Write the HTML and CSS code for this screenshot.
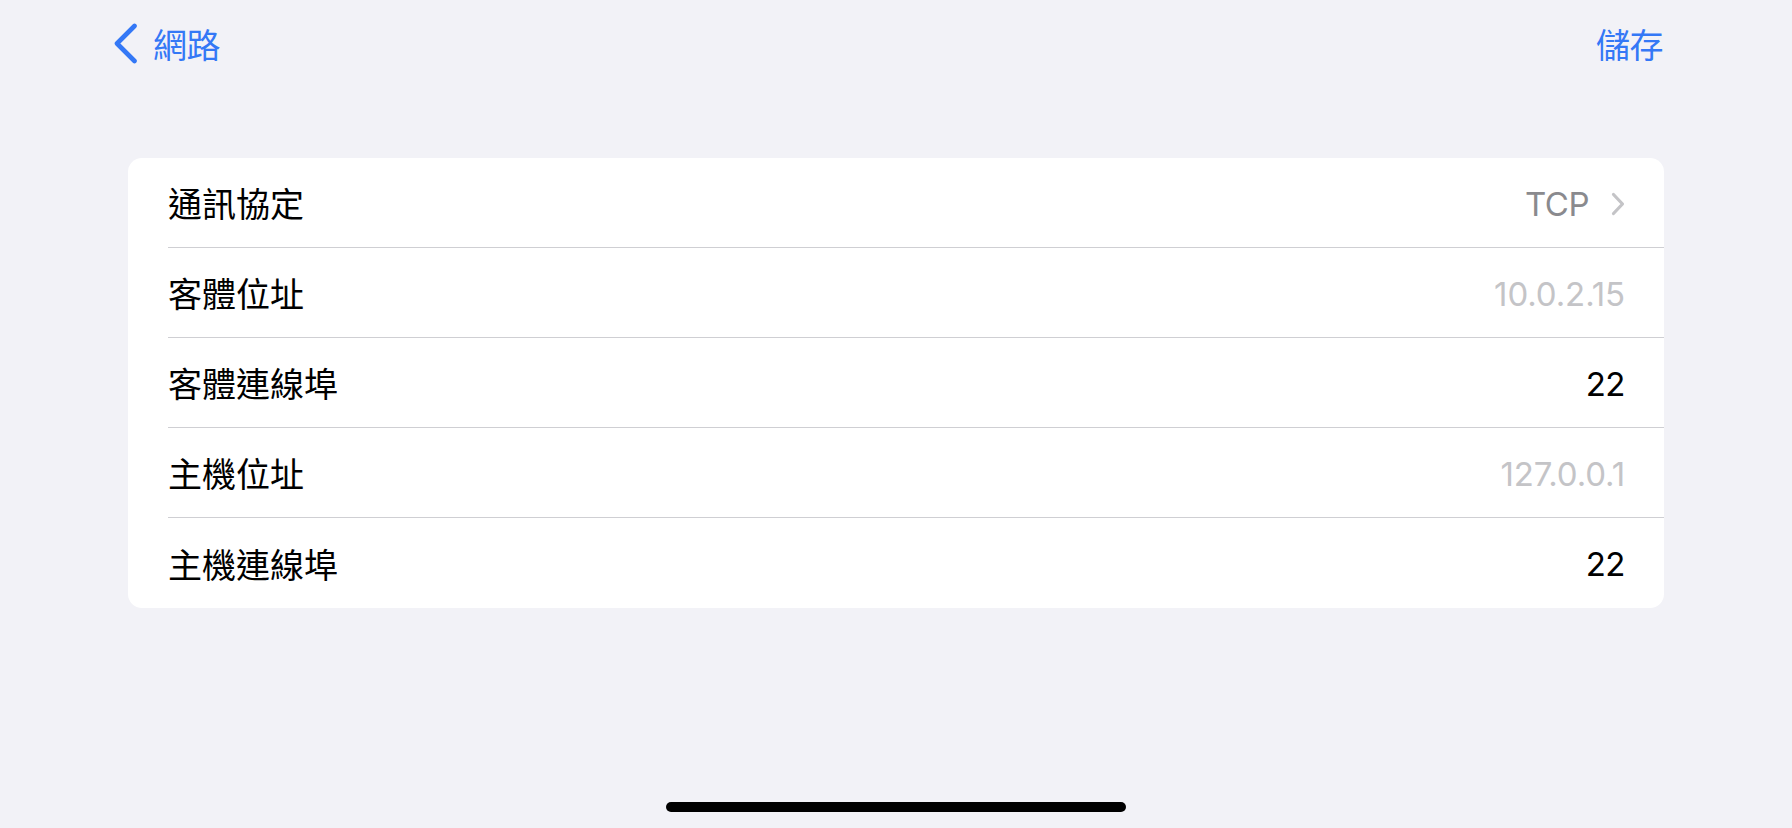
FILE: index.html
```html
<!DOCTYPE html>
<html lang="zh-Hant">
<head>
<meta charset="utf-8">
<title>網路</title>
<link rel="stylesheet" href="styles.css">
</head>
<body>
<div class="screen">
  <header class="nav">
    <a class="back">
      <svg class="back-icon" width="26" height="42" viewBox="0 0 26 42"><path d="M21.5 3 L4 20.5 L21.5 38" fill="none" stroke="#3478F6" stroke-width="4.6" stroke-linecap="round" stroke-linejoin="round"/></svg>
      <span class="nav-text">網路</span>
    </a>
    <a class="nav-text save">儲存</a>
  </header>

  <section class="card">
    <div class="row">
      <div class="row-inner">
        <span class="label">通訊協定</span>
        <span class="value secondary">TCP<svg class="chev" width="14" height="24" viewBox="0 0 14 24"><path d="M2.5 2.5 L11.5 12 L2.5 21.5" fill="none" stroke="#C4C4C7" stroke-width="3.2" stroke-linecap="round" stroke-linejoin="round"/></svg></span>
      </div>
    </div>
    <div class="row">
      <div class="row-inner">
        <span class="label">客體位址</span>
        <span class="value placeholder">10.0.2.15</span>
      </div>
    </div>
    <div class="row">
      <div class="row-inner">
        <span class="label">客體連線埠</span>
        <span class="value">22</span>
      </div>
    </div>
    <div class="row">
      <div class="row-inner">
        <span class="label">主機位址</span>
        <span class="value placeholder">127.0.0.1</span>
      </div>
    </div>
    <div class="row last">
      <div class="row-inner">
        <span class="label">主機連線埠</span>
        <span class="value">22</span>
      </div>
    </div>
  </section>

  <div class="home-indicator"></div>
</div>
</body>
</html>
```

FILE: styles.css
```css
* { box-sizing: border-box; }

html, body {
  margin: 0;
  padding: 0;
  background: #F2F2F7;
}

body {
  font-family: "Inter", "Noto Sans CJK TC", "Noto Sans", sans-serif;
  color: #000;
}

.screen {
  width: 1792px;
  height: 828px;
  display: flex;
  flex-direction: column;
  overflow: hidden;
}

.nav {
  height: 88px;
  display: flex;
  align-items: center;
  justify-content: space-between;
  padding: 0 129px 0 113px;
}

.back {
  display: flex;
  align-items: center;
  gap: 14px;
}

.back-icon {
  display: block;
}

.nav-text {
  font-family: "Noto Sans CJK TC", sans-serif;
  font-size: 34px;
  line-height: 40px;
  color: #3478F6;
  letter-spacing: -0.5px;
}

.card {
  margin: 70px 128px 0 128px;
  background: #FFFFFF;
  border-radius: 14px;
  overflow: hidden;
}

.row {
  padding-left: 40px;
}

.row-inner {
  height: 90px;
  display: flex;
  align-items: center;
  justify-content: space-between;
  padding-right: 39px;
  border-bottom: 1px solid #CFCFD3;
}

.row.last .row-inner {
  border-bottom: none;
}

.label {
  font-family: "Noto Sans CJK TC", sans-serif;
  font-size: 34px;
  line-height: 40px;
  letter-spacing: 0;
  margin-top: 1px;
}

.value {
  font-family: "Inter", "Liberation Sans", sans-serif;
  font-size: 33px;
  line-height: 40px;
  letter-spacing: -0.5px;
  display: flex;
  align-items: center;
  margin-top: 2px;
}

.value.secondary {
  color: #8A8A8E;
}

.value.placeholder {
  color: #C4C4C7;
  letter-spacing: -0.1px;
}

.chev {
  display: block;
  margin-left: 22px;
}

.home-indicator {
  margin: auto auto 16px auto;
  width: 460px;
  height: 10px;
  border-radius: 5px;
  background: #000;
}
```
